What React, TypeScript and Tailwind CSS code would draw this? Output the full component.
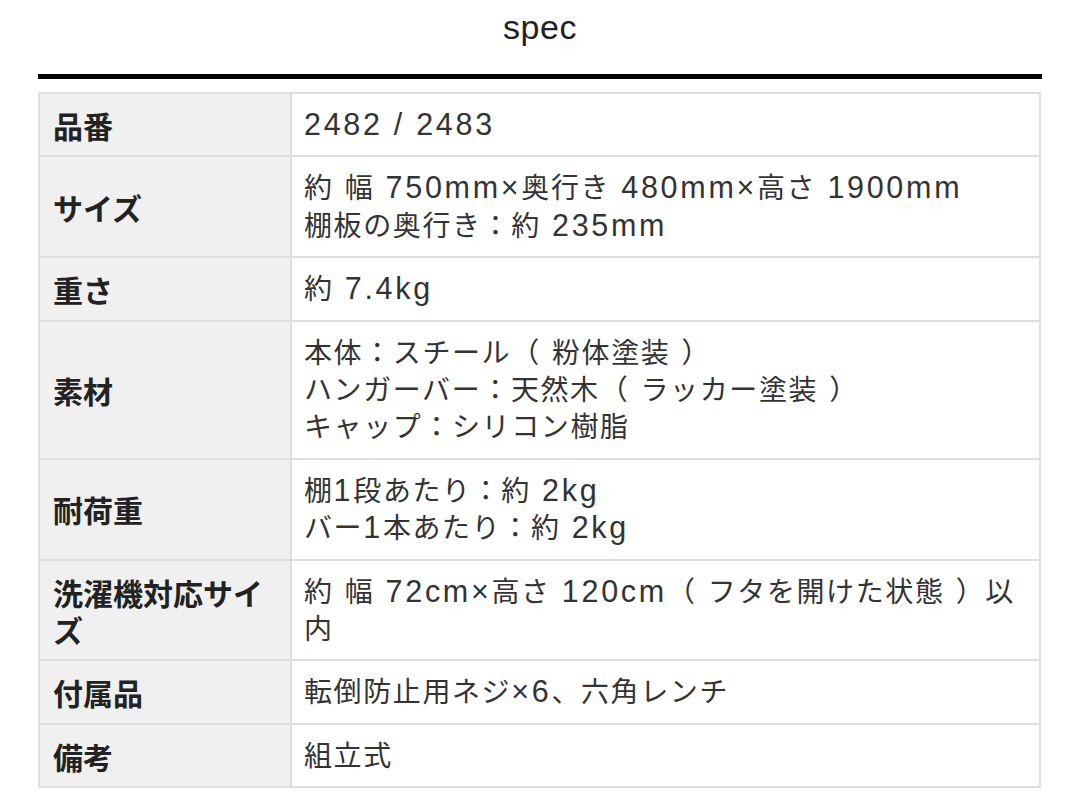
import React from "react";

const rows: { label: string[]; value: string[] }[] = [
  { label: ["品番"], value: ["2482 / 2483"] },
  { label: ["サイズ"], value: ["約 幅 750mm×奥行き 480mm×高さ 1900mm", "棚板の奥行き：約 235mm"] },
  { label: ["重さ"], value: ["約 7.4kg"] },
  { label: ["素材"], value: ["本体：スチール（ 粉体塗装 ）", "ハンガーバー：天然木（ ラッカー塗装 ）", "キャップ：シリコン樹脂"] },
  { label: ["耐荷重"], value: ["棚1段あたり：約 2kg", "バー1本あたり：約 2kg"] },
  { label: ["洗濯機対応サイ", "ズ"], value: ["約 幅 72cm×高さ 120cm（ フタを開けた状態 ）以", "内"] },
  { label: ["付属品"], value: ["転倒防止用ネジ×6、六角レンチ"] },
  { label: ["備考"], value: ["組立式"] },
];

function Mixed({ text }: { text: string }) {
  const parts = text.split(/([\x20-\x7E×]+)/).filter((p) => p.length > 0);
  return (
    <>
      {parts.map((p, i) =>
        /^[\x20-\x7E×]+$/.test(p) ? (
          <span
            key={i}
            className="text-[30.5px] leading-[20px] tracking-[2.7px] whitespace-pre"
            style={{ fontFamily: '"Liberation Sans", Arial, sans-serif' }}
          >
            {p}
          </span>
        ) : (
          <span
            key={i}
            className="text-[28px] leading-[20px] tracking-[1.6px]"
            style={{ fontFamily: '"Noto Sans CJK JP", sans-serif' }}
          >
            {p}
          </span>
        )
      )}
    </>
  );
}

export default function App() {
  return (
    <div
      className="w-[1080px] h-[806px] bg-white overflow-hidden"
      style={{ fontFamily: '"Liberation Sans", "Noto Sans CJK JP", sans-serif' }}
    >
      <div className="pt-[7px] text-center text-[34px] leading-[40px] tracking-[0.5px] text-[#222]">spec</div>
      <div className="mx-[38px] mt-[27px] h-[5px] bg-black" />
      <table className="ml-[38px] mt-[13px] w-[1003px] border-collapse">
        <tbody>
          {rows.map((r, i) => (
            <tr key={i}>
              <td
                className="w-[252px] border-2 border-[#dedede] bg-[#f0f0f0] px-[13px] pt-[13px] pb-[11px] align-middle text-[30px] leading-[37.4px] font-bold text-[#222]"
                style={{ fontFamily: '"Noto Sans CJK JP", sans-serif' }}
              >
                {r.label.map((l, j) => (
                  <div key={j} className="whitespace-nowrap h-[37.4px]">{l}</div>
                ))}
              </td>
              <td className="border-2 border-[#dedede] bg-white px-[12px] pt-[13px] pb-[11px] align-middle text-[28px] leading-[37.4px] text-[#333]">
                {r.value.map((l, j) => (
                  <div key={j} className="whitespace-nowrap h-[37.4px]">
                    <Mixed text={l} />
                  </div>
                ))}
              </td>
            </tr>
          ))}
        </tbody>
      </table>
    </div>
  );
}
